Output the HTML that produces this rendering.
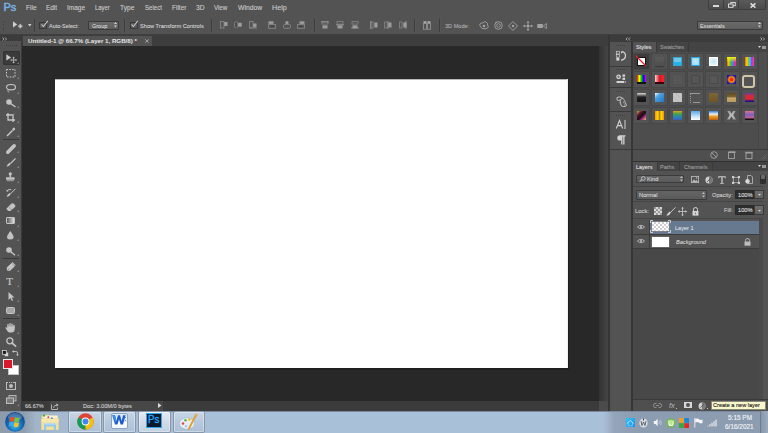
<!DOCTYPE html>
<html><head><meta charset="utf-8">
<style>
*{margin:0;padding:0;box-sizing:border-box}
html,body{width:768px;height:433px;overflow:hidden;background:#535353;font-family:"Liberation Sans",sans-serif;position:relative}
.a{position:absolute}
.t{position:absolute;white-space:pre;transform-origin:0 0;line-height:1;-webkit-text-stroke:0.1px currentColor}
svg{position:absolute;overflow:visible}
#wrap{position:absolute;left:0;top:0;width:768px;height:433px;overflow:hidden}
</style></head><body><div id="wrap">
<div class="a" style="left:0px;top:0px;width:768px;height:15px;background:#535353;"></div>
<div class="a" style="left:0px;top:15px;width:768px;height:1px;background:#484848;"></div>
<div class="a" style="left:0px;top:15px;width:768px;height:20px;background:#535353;"></div>
<div class="a" style="left:0px;top:34px;width:768px;height:1px;background:#3f3f3f;"></div>
<div class="a" style="left:0px;top:35px;width:22px;height:376px;background:#535353;"></div>
<div class="a" style="left:0px;top:35px;width:22px;height:6px;background:#3c3c3c;"></div>
<div class="a" style="left:21px;top:35px;width:1px;height:376px;background:#3a3a3a;"></div>
<div class="a" style="left:22px;top:35px;width:586px;height:11px;background:#3d3d3d;"></div>
<div class="a" style="left:23px;top:36px;width:129px;height:10px;background:#535353;"></div>
<div class="a" style="left:22px;top:46px;width:577px;height:355px;background:#282828;"></div>
<div class="a" style="left:56px;top:80px;width:513px;height:290px;background:#1f1f1f;"></div>
<div class="a" style="left:55px;top:79px;width:512px;height:289px;background:#ffffff;"></div>
<div class="a" style="left:55px;top:79px;width:512px;height:1px;background:#b8b8b8;"></div>
<div class="a" style="left:567px;top:79px;width:0.6px;height:289px;background:#f0f0f0;"></div>
<div class="a" style="left:599px;top:46px;width:9.5px;height:355px;background:linear-gradient(90deg,#333 0,#3a3a3a 40%,#454545 80%,#3a3a3a 100%);"></div>
<div class="a" style="left:599px;top:401px;width:9.5px;height:9.5px;background:#4b4b4b;"></div>
<div class="a" style="left:22px;top:401px;width:141px;height:9.5px;background:#474747;"></div>
<div class="a" style="left:22px;top:401px;width:28px;height:9.5px;background:#3b3b3b;"></div>
<div class="a" style="left:163px;top:401px;width:436px;height:9.5px;background:#3b3b3b;"></div>
<div class="a" style="left:608px;top:35px;width:160px;height:376px;background:#363636;"></div>
<div class="a" style="left:610px;top:35px;width:158px;height:7px;background:#3c3c3c;"></div>
<div class="a" style="left:610px;top:42px;width:21px;height:369px;background:#535353;"></div>
<div class="a" style="left:633px;top:42px;width:135px;height:369px;background:#535353;"></div>
<div class="a" style="left:0px;top:410.5px;width:768px;height:22.5px;background:linear-gradient(90deg,#8d9bab 0px,#8f9eae 24px,#a0b3c7 35px,#a5bad0 68px,#a9c0d9 210px,#a9c0d9 603px,#a2b5cb 608px,#93a5ba 614px,#8c9cb1 640px,#8c9cb1 768px);"></div>
<div class="t" style="left:3.4px;top:1.5px;font-size:11px;font-weight:400;color:#78afe2;-webkit-text-stroke:0.5px #78afe2">Ps</div>
<div class="a" style="left:708px;top:0px;width:16px;height:10px;background:linear-gradient(#5a5a5a,#4c4c4c);border:1px solid #3e3e3e;border-top:none;border-radius:0 0 0 2px"></div>
<div class="a" style="left:723px;top:0px;width:16px;height:10px;background:linear-gradient(#5a5a5a,#4c4c4c);border:1px solid #3e3e3e;border-top:none"></div>
<div class="a" style="left:738px;top:0px;width:28px;height:10px;background:linear-gradient(#5a5a5a,#4c4c4c);border:1px solid #3e3e3e;border-top:none;border-radius:0 0 2px 0"></div>
<div class="a" style="left:713px;top:5px;width:6px;height:2px;background:#d8d8d8;"></div>
<svg style="left:728px;top:2.2px" width="8" height="6"><rect x="2.8" y="0.5" width="4.5" height="3.2" fill="none" stroke="#d8d8d8" stroke-width="1"/><rect x="0.5" y="2" width="4.5" height="3.3" fill="#555" stroke="#d8d8d8" stroke-width="1"/></svg>
<svg style="left:749.5px;top:2.6px" width="6" height="5"><path d="M0.6 0.4L5.4 4.6M5.4 0.4L0.6 4.6" stroke="#e0e0e0" stroke-width="1.4"/></svg>
<div class="a" style="left:3.3px;top:20.5px;width:1px;height:1px;background:#3a3a3a;"></div>
<div class="a" style="left:3.3px;top:24px;width:1px;height:1px;background:#3a3a3a;"></div>
<div class="a" style="left:3.3px;top:27.5px;width:1px;height:1px;background:#3a3a3a;"></div>
<div class="a" style="left:3.3px;top:30px;width:1px;height:1px;background:#3a3a3a;"></div>
<svg style="left:12px;top:21px" width="12" height="9"><path d="M1 0.3L5.2 3.5L1 6.5Z" fill="#cfcfcf"/><path d="M8.3 2.6L10.9 5.2L8.3 7.8L5.7 5.2Z" fill="#9a9a9a"/><path d="M8.3 3.2V7.2M6.3 5.2H10.3" stroke="#cfcfcf" stroke-width="0.8"/></svg>
<svg style="left:27.5px;top:24px" width="4" height="3"><path d="M0 0H3.5L1.75 2.5Z" fill="#d0d0d0"/></svg>
<div class="a" style="left:34px;top:19px;width:1px;height:13px;background:#3d3d3d;"></div>
<div class="a" style="left:35px;top:19px;width:1px;height:13px;background:#565656;"></div>
<div class="a" style="left:124px;top:19px;width:1px;height:13px;background:#3d3d3d;"></div>
<div class="a" style="left:125px;top:19px;width:1px;height:13px;background:#565656;"></div>
<div class="a" style="left:210.5px;top:19px;width:1px;height:13px;background:#3d3d3d;"></div>
<div class="a" style="left:211.5px;top:19px;width:1px;height:13px;background:#565656;"></div>
<div class="a" style="left:313.5px;top:19px;width:1px;height:13px;background:#3d3d3d;"></div>
<div class="a" style="left:314.5px;top:19px;width:1px;height:13px;background:#565656;"></div>
<div class="a" style="left:414.2px;top:19px;width:1px;height:13px;background:#3d3d3d;"></div>
<div class="a" style="left:415.2px;top:19px;width:1px;height:13px;background:#565656;"></div>
<div class="a" style="left:439.2px;top:19px;width:1px;height:13px;background:#3d3d3d;"></div>
<div class="a" style="left:440.2px;top:19px;width:1px;height:13px;background:#565656;"></div>
<div class="a" style="left:39px;top:21.8px;width:8px;height:7px;background:#575757;border:1px solid #383838;"></div>
<svg style="left:39.5px;top:20px" width="9" height="8"><path d="M1.5 4.3L3.4 6.5L7.8 0.8" fill="none" stroke="#c8c8c8" stroke-width="1.1"/></svg>
<div class="a" style="left:129.8px;top:21.8px;width:8px;height:7px;background:#575757;border:1px solid #383838;"></div>
<svg style="left:130.3px;top:20px" width="9" height="8"><path d="M1.5 4.3L3.4 6.5L7.8 0.8" fill="none" stroke="#c8c8c8" stroke-width="1.1"/></svg>
<div class="a" style="left:87.5px;top:20.6px;width:31px;height:9px;background:linear-gradient(#6a6a6a,#5e5e5e);border:1px solid #3a3a3a;border-radius:1px"></div>
<svg style="left:113.5px;top:22.3px" width="3" height="6"><path d="M0 2H3L1.5 0Z M0 3.6H3L1.5 5.6Z" fill="#cfcfcf"/></svg>
<div class="a" style="left:696.5px;top:20.6px;width:66.5px;height:9px;background:linear-gradient(#6a6a6a,#5e5e5e);border:1px solid #3a3a3a;border-radius:1px"></div>
<svg style="left:758px;top:22.3px" width="3" height="6"><path d="M0 2H3L1.5 0Z M0 3.6H3L1.5 5.6Z" fill="#cfcfcf"/></svg>
<svg style="left:219.7px;top:21.3px" width="8" height="8"><rect x="0.5" y="0.5" width="3.5" height="6.5" fill="none" stroke="#808080" stroke-width="1"/><rect x="4.2" y="1" width="3.3" height="4" fill="#9c9c9c"/></svg>
<svg style="left:234.2px;top:21.3px" width="8" height="8"><rect x="0.5" y="0.8" width="3.3" height="6" rx="1.5" fill="none" stroke="#808080" stroke-width="1"/><path d="M2.2 1.5V6.5" stroke="#3a3a3a" stroke-width="0.8"/><rect x="4" y="1.8" width="3.8" height="4" rx="1" fill="#9c9c9c"/></svg>
<svg style="left:249px;top:21.3px" width="8" height="8"><rect x="0.5" y="0.5" width="3.5" height="6.2" fill="none" stroke="#808080" stroke-width="1"/><rect x="4.2" y="2.5" width="3.3" height="4" fill="#9c9c9c"/><path d="M0 7.3H8" stroke="#808080" stroke-width="0.8"/></svg>
<svg style="left:267.8px;top:21.3px" width="8" height="8"><rect x="0.5" y="0.3" width="5" height="2.6" fill="#9c9c9c"/><rect x="0.5" y="3.5" width="7" height="3.8" fill="none" stroke="#808080" stroke-width="1"/><rect x="3" y="4.8" width="3" height="1.2" fill="#3e3e3e"/></svg>
<svg style="left:282.5px;top:21.3px" width="8" height="8"><circle cx="4" cy="1.8" r="1.7" fill="#9c9c9c"/><rect x="0.5" y="3.5" width="7" height="3.8" rx="1.3" fill="none" stroke="#808080" stroke-width="1"/><path d="M4 7V8" stroke="#808080"/></svg>
<svg style="left:297px;top:21.3px" width="8" height="8"><rect x="2.5" y="0.3" width="5" height="2.6" fill="#9c9c9c"/><rect x="0.5" y="3.5" width="7" height="3.8" fill="none" stroke="#808080" stroke-width="1"/><rect x="2" y="4.8" width="3" height="1.2" fill="#3e3e3e"/></svg>
<svg style="left:321.3px;top:21.3px" width="8" height="8"><rect x="1" y="0.5" width="6" height="2.6" fill="none" stroke="#808080" stroke-width="0.9"/><rect x="1.5" y="4.3" width="5" height="3.2" fill="#9c9c9c"/><path d="M0 1H8" stroke="#9c9c9c" stroke-width="0.8"/></svg>
<svg style="left:335.7px;top:21.3px" width="8" height="8"><rect x="1" y="0.5" width="6" height="2.6" fill="none" stroke="#808080" stroke-width="0.9"/><rect x="1.5" y="4.3" width="5" height="3.2" fill="#9c9c9c"/><path d="M0 3.8H8" stroke="#9c9c9c" stroke-width="0.8"/></svg>
<svg style="left:350.5px;top:21.3px" width="8" height="8"><rect x="1" y="0.5" width="6" height="2.6" fill="none" stroke="#808080" stroke-width="0.9"/><rect x="1.5" y="4.3" width="5" height="3.2" fill="#9c9c9c"/><path d="M0 6.8H8" stroke="#9c9c9c" stroke-width="0.8"/></svg>
<svg style="left:370px;top:21.3px" width="8" height="8"><rect x="0.5" y="1" width="2.6" height="6" fill="none" stroke="#808080" stroke-width="0.9"/><rect x="4.3" y="1.5" width="3.2" height="5" fill="#9c9c9c"/><path d="M1 0V8" stroke="#9c9c9c" stroke-width="0.8"/></svg>
<svg style="left:384px;top:21.3px" width="8" height="8"><rect x="0.5" y="1" width="2.6" height="6" fill="none" stroke="#808080" stroke-width="0.9"/><rect x="4.3" y="1.5" width="3.2" height="5" fill="#9c9c9c"/><path d="M4 0V8" stroke="#9c9c9c" stroke-width="0.8"/></svg>
<svg style="left:399.4px;top:21.3px" width="8" height="8"><rect x="0.5" y="1" width="2.6" height="6" fill="none" stroke="#808080" stroke-width="0.9"/><rect x="4.3" y="1.5" width="3.2" height="5" fill="#9c9c9c"/><path d="M7 0V8" stroke="#9c9c9c" stroke-width="0.8"/></svg>
<svg style="left:422.8px;top:21px" width="8" height="9"><rect x="0.5" y="2.5" width="3" height="5.8" fill="none" stroke="#8e8e8e" stroke-width="0.9"/><rect x="4.5" y="2.5" width="3" height="5.8" fill="none" stroke="#8e8e8e" stroke-width="0.9"/><rect x="0.5" y="0.2" width="3" height="2" fill="#a9a9a9"/><rect x="4.5" y="0.2" width="3" height="2" fill="#a9a9a9"/></svg>
<svg style="left:478.5px;top:20.5px" width="10" height="9"><path d="M2 6Q0 5 1 3Q2 1.5 4 2Q5 0 7 1Q9 2 8.5 4Q10 5.5 8.5 7Q7 8.5 5 7.5Q3 8.5 2 6Z" fill="none" stroke="#a2a2a2" stroke-width="0.9"/><circle cx="5" cy="5" r="1.3" fill="#a2a2a2"/></svg>
<svg style="left:493.5px;top:20.5px" width="9" height="9"><circle cx="4.5" cy="4.5" r="3.8" fill="none" stroke="#a2a2a2" stroke-width="0.9"/><circle cx="4.5" cy="4.5" r="1.8" fill="none" stroke="#a2a2a2" stroke-width="0.9"/><path d="M1 1.5L2.5 0.5L2.8 2.3Z" fill="#a2a2a2"/></svg>
<svg style="left:508px;top:20.5px" width="10" height="10"><path d="M5 0.5L9.5 5L5 9.5L0.5 5Z" fill="none" stroke="#a2a2a2" stroke-width="0.9"/><circle cx="5" cy="5" r="1.2" fill="#a2a2a2"/></svg>
<svg style="left:522.5px;top:20.5px" width="10" height="10"><path d="M5 0.5V9.5M0.5 5H9.5" stroke="#a2a2a2" stroke-width="0.9"/><path d="M5 0L6.5 1.8H3.5Z M5 10L6.5 8.2H3.5Z M0 5L1.8 3.5V6.5Z M10 5L8.2 3.5V6.5Z" fill="#a2a2a2"/><circle cx="5" cy="5" r="1.3" fill="#a2a2a2"/></svg>
<svg style="left:537px;top:21.5px" width="10" height="8"><rect x="0.3" y="2" width="5.5" height="4" fill="#a2a2a2"/><path d="M6.3 4L9.5 1.5V6.5Z" fill="none" stroke="#a2a2a2" stroke-width="0.8"/></svg>
<svg style="left:2px;top:36.5px" width="6" height="4"><path d="M0.5 0.5L2 2L0.5 3.5M3 0.5L4.5 2L3 3.5" fill="none" stroke="#bdbdbd" stroke-width="0.8"/></svg>
<div class="a" style="left:6px;top:44.5px;width:1px;height:1px;background:#3e3e3e;"></div>
<div class="a" style="left:8px;top:44.5px;width:1px;height:1px;background:#3e3e3e;"></div>
<div class="a" style="left:10px;top:44.5px;width:1px;height:1px;background:#3e3e3e;"></div>
<div class="a" style="left:12px;top:44.5px;width:1px;height:1px;background:#3e3e3e;"></div>
<div class="a" style="left:14px;top:44.5px;width:1px;height:1px;background:#3e3e3e;"></div>
<div class="a" style="left:16px;top:44.5px;width:1px;height:1px;background:#3e3e3e;"></div>
<div class="a" style="left:3px;top:51.4px;width:16.5px;height:13.5px;background:#3b3b3b;border-radius:2px;box-shadow:inset 0 0 0 1px #333"></div>
<svg style="left:5.5px;top:54.3px" width="12" height="12"><path d="M0.3 0.3L5.2 3.6L0.3 6.5Z" fill="#c8c8c8"/><path d="M7.6 3.3V8.7M4.9 6H10.3" stroke="#b8b8b8" stroke-width="0.9"/><path d="M7.6 2.6L8.8 3.9H6.4Z M7.6 9.4L8.8 8.1H6.4Z M4.2 6L5.5 4.8V7.2Z M11 6L9.7 4.8V7.2Z" fill="#b8b8b8"/></svg>
<svg style="left:17px;top:62px" width="2" height="2"><path d="M1.8 0.2V1.8H0.2Z" fill="#a8a8a8"/></svg>
<svg style="left:6px;top:68.5px" width="12" height="12"><rect x="0.5" y="0.5" width="8.5" height="7.5" fill="none" stroke="#c8c8c8" stroke-width="1" stroke-dasharray="1.6 1.2"/></svg>
<svg style="left:17px;top:76.5px" width="2" height="2"><path d="M1.8 0.2V1.8H0.2Z" fill="#a8a8a8"/></svg>
<svg style="left:5.5px;top:83.5px" width="12" height="12"><ellipse cx="5" cy="3.2" rx="4.5" ry="2.7" fill="none" stroke="#c8c8c8" stroke-width="1.1"/><path d="M2 5.5Q1.5 7.5 3 8.5" fill="none" stroke="#c8c8c8" stroke-width="0.9"/></svg>
<svg style="left:17px;top:91.5px" width="2" height="2"><path d="M1.8 0.2V1.8H0.2Z" fill="#a8a8a8"/></svg>
<svg style="left:6px;top:98.5px" width="12" height="12"><circle cx="3" cy="3" r="2.8" fill="#c4c4c4"/><path d="M4.5 4.5L9.5 8" stroke="#c8c8c8" stroke-width="1.3"/></svg>
<svg style="left:17px;top:106px" width="2" height="2"><path d="M1.8 0.2V1.8H0.2Z" fill="#a8a8a8"/></svg>
<svg style="left:6px;top:112.5px" width="10" height="10"><path d="M2 0V7H9M0 2H7V9" fill="none" stroke="#c8c8c8" stroke-width="1.3"/><path d="M8.5 0.5L6 3" stroke="#999" stroke-width="0.7"/></svg>
<svg style="left:17px;top:120.5px" width="2" height="2"><path d="M1.8 0.2V1.8H0.2Z" fill="#a8a8a8"/></svg>
<svg style="left:6px;top:127px" width="12" height="12"><path d="M1 9L6.5 3.5" stroke="#c8c8c8" stroke-width="1.5"/><path d="M6 2.2L7.8 0.5Q9.3 0.8 9.2 2.2L7.5 4Z" fill="#c4c4c4"/></svg>
<svg style="left:17px;top:135px" width="2" height="2"><path d="M1.8 0.2V1.8H0.2Z" fill="#a8a8a8"/></svg>
<div class="a" style="left:3px;top:139.3px;width:15.5px;height:1px;background:#3a3a3a;"></div>
<svg style="left:6px;top:143.5px" width="12" height="12"><path d="M1.8 8.2L8.2 1.8" stroke="#c4c4c4" stroke-width="3.6" stroke-linecap="round"/></svg>
<svg style="left:17px;top:151px" width="2" height="2"><path d="M1.8 0.2V1.8H0.2Z" fill="#a8a8a8"/></svg>
<svg style="left:6px;top:157.5px" width="12" height="12"><path d="M9.5 0.5L4.5 5.5" stroke="#c8c8c8" stroke-width="1.1"/><path d="M4.8 5.2Q3.5 8.8 0.5 8.5Q1.5 6 3.8 4.8Z" fill="#c6c6c6"/></svg>
<svg style="left:17px;top:165.5px" width="2" height="2"><path d="M1.8 0.2V1.8H0.2Z" fill="#a8a8a8"/></svg>
<svg style="left:5.6px;top:172.2px" width="12" height="12"><circle cx="4.3" cy="1.8" r="1.6" fill="#c4c4c4"/><path d="M3.5 2.5H5.1V5.2H3.5Z" fill="#c4c4c4"/><rect x="0" y="5.2" width="8.6" height="2.6" rx="0.6" fill="#c4c4c4"/><rect x="0.8" y="8.2" width="7" height="1" fill="#a8a8a8"/></svg>
<svg style="left:17px;top:180.5px" width="2" height="2"><path d="M1.8 0.2V1.8H0.2Z" fill="#a8a8a8"/></svg>
<svg style="left:6px;top:187.5px" width="12" height="12"><path d="M9.5 0.8L4.5 5.8" stroke="#c8c8c8" stroke-width="1"/><path d="M4.8 5.5Q3.5 9 0.5 8.8Q1.5 6.3 3.8 5.1Z" fill="#c6c6c6"/><path d="M0.8 3.2Q2.5 0.5 5.3 1.7" fill="none" stroke="#c8c8c8" stroke-width="0.9"/><path d="M0.3 1.5L1 3.8L3 3Z" fill="#c8c8c8"/></svg>
<svg style="left:17px;top:195.5px" width="2" height="2"><path d="M1.8 0.2V1.8H0.2Z" fill="#a8a8a8"/></svg>
<svg style="left:5.5px;top:202px" width="12" height="12"><path d="M0.5 6.5L5.5 1.5Q6.5 0.8 7.5 1.5L9.2 3.2Q9.8 4 9 5L4.5 9H2.5L0.7 7.5Z" fill="#c2c2c2"/><path d="M2.5 4.5L6 8" stroke="#8a8a8a" stroke-width="0.6"/></svg>
<svg style="left:17px;top:210px" width="2" height="2"><path d="M1.8 0.2V1.8H0.2Z" fill="#a8a8a8"/></svg>
<div class="a" style="left:5.8px;top:217.3px;width:9.2px;height:7.2px;background:linear-gradient(90deg,#5a5a5a,#dcdcdc);border:1px solid #c4c4c4;border-radius:1px"></div>
<svg style="left:17px;top:224.5px" width="2" height="2"><path d="M1.8 0.2V1.8H0.2Z" fill="#a8a8a8"/></svg>
<svg style="left:7px;top:231.4px" width="12" height="12"><path d="M3.3 0Q0 4.5 0 6Q0 8.5 3.3 8.5Q6.6 8.5 6.6 6Q6.6 4.5 3.3 0Z" fill="#c2c2c2"/></svg>
<svg style="left:17px;top:239px" width="2" height="2"><path d="M1.8 0.2V1.8H0.2Z" fill="#a8a8a8"/></svg>
<svg style="left:6px;top:246.6px" width="12" height="12"><circle cx="3" cy="3" r="2.8" fill="#c4c4c4"/><path d="M4.8 4.8L9 8.3" stroke="#c8c8c8" stroke-width="1.3"/></svg>
<svg style="left:17px;top:254px" width="2" height="2"><path d="M1.8 0.2V1.8H0.2Z" fill="#a8a8a8"/></svg>
<div class="a" style="left:3px;top:257.8px;width:15.5px;height:1px;background:#3a3a3a;"></div>
<svg style="left:6px;top:261.5px" width="12" height="12"><path d="M1 9L0.8 5.5L5.5 1L8.7 4.2L4.2 8.8Z" fill="#c4c4c4"/><path d="M1 9L3.5 6.5" stroke="#666" stroke-width="0.6"/><path d="M6 0.5L9.2 3.7" stroke="#c4c4c4" stroke-width="1.1"/></svg>
<svg style="left:17px;top:269.5px" width="2" height="2"><path d="M1.8 0.2V1.8H0.2Z" fill="#a8a8a8"/></svg>
<div class="t" style="left:6.2px;top:276px;font-size:11px;font-family:'Liberation Serif',serif;color:#c4c4c4;-webkit-text-stroke:0.2px #c4c4c4">T</div>
<svg style="left:17px;top:285px" width="2" height="2"><path d="M1.8 0.2V1.8H0.2Z" fill="#a8a8a8"/></svg>
<svg style="left:8px;top:292.2px" width="12" height="12"><path d="M0.5 0L6.5 5.5H3.8L5 8.5L3.8 9L2.5 6L0.5 8Z" fill="#c4c4c4"/></svg>
<svg style="left:17px;top:300px" width="2" height="2"><path d="M1.8 0.2V1.8H0.2Z" fill="#a8a8a8"/></svg>
<div class="a" style="left:6px;top:306.8px;width:9px;height:7.6px;background:#a6a6a6;border:1px solid #c4c4c4;border-radius:1.5px"></div>
<svg style="left:17px;top:314px" width="2" height="2"><path d="M1.8 0.2V1.8H0.2Z" fill="#a8a8a8"/></svg>
<div class="a" style="left:3px;top:318.3px;width:15.5px;height:1px;background:#3a3a3a;"></div>
<svg style="left:5.2px;top:322.6px" width="12" height="12"><path d="M3 4V1.6M5 3.8V0.8M7 3.8V1.2M9 4.2V2.4" stroke="#c4c4c4" stroke-width="1.4" stroke-linecap="round"/><path d="M2.3 3.5H9.7V6.5Q9.5 9.5 6.5 9.5H4.5Q3 9.5 2 7.5L0.3 4.8Q0.5 4 1.3 4.3L2.3 5.2Z" fill="#c4c4c4"/></svg>
<svg style="left:17px;top:331.5px" width="2" height="2"><path d="M1.8 0.2V1.8H0.2Z" fill="#a8a8a8"/></svg>
<svg style="left:5.6px;top:336.6px" width="12" height="12"><circle cx="3.8" cy="3.8" r="3" fill="none" stroke="#c4c4c4" stroke-width="1.3"/><path d="M6 6L9.6 9.2" stroke="#c4c4c4" stroke-width="1.7" stroke-linecap="round"/></svg>
<svg style="left:2px;top:350.4px" width="8" height="8"><rect x="2.6" y="2.6" width="3.6" height="3.6" fill="#d8d8d8"/><rect x="0.5" y="0.5" width="3.8" height="3.8" fill="#1a1a1a" stroke="#d8d8d8" stroke-width="0.8"/></svg>
<svg style="left:12px;top:350.2px" width="8" height="8"><path d="M1 1.5H4Q5.5 1.5 5.5 3V5" fill="none" stroke="#c4c4c4" stroke-width="0.9"/><path d="M0 1.5L1.6 0V3Z M5.5 6L4 4.4H7Z" fill="#c4c4c4"/></svg>
<div class="a" style="left:3.2px;top:359.4px;width:9.5px;height:10.1px;background:#d7192f;border:1px solid #e8e8e8;z-index:2"></div>
<div class="a" style="left:8.1px;top:364.9px;width:10.8px;height:10.6px;background:#ffffff;border:1px solid #c4c4c4"></div>
<svg style="left:6px;top:381.5px" width="12" height="12"><rect x="0.5" y="0.5" width="9" height="7" fill="none" stroke="#bdbdbd" stroke-width="1"/><circle cx="5" cy="4" r="2" fill="#bdbdbd"/><path d="M2 0.5H8" stroke="#535353" stroke-width="1" stroke-dasharray="1 1"/></svg>
<svg style="left:5.5px;top:394.8px" width="12" height="12"><rect x="3" y="0.5" width="7" height="5.5" fill="#6a6a6a" stroke="#bdbdbd" stroke-width="0.9"/><rect x="0.5" y="3" width="7" height="5.5" fill="#7a7a7a" stroke="#c8c8c8" stroke-width="0.9"/></svg>
<svg style="left:17px;top:404px" width="2" height="2"><path d="M1.8 0.2V1.8H0.2Z" fill="#a8a8a8"/></svg>
<svg style="left:624.5px;top:36.8px" width="6" height="4"><path d="M2.5 0.5L1 2L2.5 3.5M5 0.5L3.5 2L5 3.5" fill="none" stroke="#bdbdbd" stroke-width="0.8"/></svg>
<svg style="left:760px;top:36.8px" width="6" height="4"><path d="M0.5 0.5L2 2L0.5 3.5M3 0.5L4.5 2L3 3.5" fill="none" stroke="#bdbdbd" stroke-width="0.8"/></svg>
<div class="a" style="left:610px;top:42px;width:21px;height:23.5px;background:#535353;"></div>
<div class="a" style="left:610px;top:66.5px;width:21px;height:20.0px;background:#535353;"></div>
<div class="a" style="left:610px;top:87.5px;width:21px;height:23.5px;background:#535353;"></div>
<div class="a" style="left:610px;top:112px;width:21px;height:36.5px;background:#535353;"></div>
<div class="a" style="left:610px;top:149.5px;width:21px;height:261.5px;background:#535353;"></div>
<div class="a" style="left:610px;top:65.5px;width:21px;height:1px;background:#3a3a3a;"></div>
<div class="a" style="left:610px;top:86.5px;width:21px;height:1px;background:#3a3a3a;"></div>
<div class="a" style="left:610px;top:111px;width:21px;height:1px;background:#3a3a3a;"></div>
<div class="a" style="left:610px;top:148.5px;width:21px;height:1px;background:#3a3a3a;"></div>
<div class="a" style="left:616px;top:45px;width:1px;height:0.8px;background:#404040;"></div>
<div class="a" style="left:618px;top:45px;width:1px;height:0.8px;background:#404040;"></div>
<div class="a" style="left:620px;top:45px;width:1px;height:0.8px;background:#404040;"></div>
<div class="a" style="left:622px;top:45px;width:1px;height:0.8px;background:#404040;"></div>
<div class="a" style="left:624px;top:45px;width:1px;height:0.8px;background:#404040;"></div>
<div class="a" style="left:616px;top:68.8px;width:1px;height:0.8px;background:#404040;"></div>
<div class="a" style="left:618px;top:68.8px;width:1px;height:0.8px;background:#404040;"></div>
<div class="a" style="left:620px;top:68.8px;width:1px;height:0.8px;background:#404040;"></div>
<div class="a" style="left:622px;top:68.8px;width:1px;height:0.8px;background:#404040;"></div>
<div class="a" style="left:624px;top:68.8px;width:1px;height:0.8px;background:#404040;"></div>
<div class="a" style="left:616px;top:91px;width:1px;height:0.8px;background:#404040;"></div>
<div class="a" style="left:618px;top:91px;width:1px;height:0.8px;background:#404040;"></div>
<div class="a" style="left:620px;top:91px;width:1px;height:0.8px;background:#404040;"></div>
<div class="a" style="left:622px;top:91px;width:1px;height:0.8px;background:#404040;"></div>
<div class="a" style="left:624px;top:91px;width:1px;height:0.8px;background:#404040;"></div>
<div class="a" style="left:616px;top:114.8px;width:1px;height:0.8px;background:#404040;"></div>
<div class="a" style="left:618px;top:114.8px;width:1px;height:0.8px;background:#404040;"></div>
<div class="a" style="left:620px;top:114.8px;width:1px;height:0.8px;background:#404040;"></div>
<div class="a" style="left:622px;top:114.8px;width:1px;height:0.8px;background:#404040;"></div>
<div class="a" style="left:624px;top:114.8px;width:1px;height:0.8px;background:#404040;"></div>
<svg style="left:616px;top:51px" width="11" height="10"><rect x="0.3" y="0.3" width="3" height="2.6" fill="none" stroke="#cfcfcf" stroke-width="0.7"/><rect x="0.3" y="3.6" width="3" height="2.6" fill="none" stroke="#cfcfcf" stroke-width="0.7"/><rect x="0.3" y="6.8" width="3" height="2.8" fill="#d6d6d6"/><path d="M5 9.2Q9.6 8.5 9.5 4.5Q9.3 1.2 6 0.5" fill="none" stroke="#d6d6d6" stroke-width="1.2"/><path d="M5 0L7 1.7L5 2.4Z" fill="#d6d6d6"/></svg>
<svg style="left:615.8px;top:73.5px" width="11" height="10"><circle cx="2.6" cy="2.8" r="2.4" fill="#d4d4d4"/><path d="M1.2 2.8H4M2.6 1.4V4.2" stroke="#535353" stroke-width="0.6"/><rect x="6.5" y="0.5" width="2.6" height="2.2" fill="#d4d4d4"/><rect x="6.5" y="3.7" width="2.6" height="2.2" fill="#d4d4d4"/><rect x="0.5" y="7" width="7.5" height="2" fill="#d4d4d4"/><rect x="8.5" y="7" width="1.5" height="2" fill="#999"/></svg>
<svg style="left:615.5px;top:96.3px" width="12" height="12"><path d="M1 1.5Q4 0 6.5 2L4 4Q2.5 5 1 4Z" fill="none" stroke="#c8c8c8" stroke-width="0.9"/><path d="M4 4L5 9Q6 11 9 10.5L10.5 9.5L8.5 4.5Q7.5 3 6.5 2" fill="none" stroke="#c8c8c8" stroke-width="0.9"/><path d="M3.5 6L6 11M7 5L9 10" stroke="#a8a8a8" stroke-width="0.6"/></svg>
<svg style="left:615.5px;top:120.3px" width="11" height="9"><path d="M0.3 8.5L3.5 0.5L6.7 8.5M1.6 5.6H5.4" fill="none" stroke="#d2d2d2" stroke-width="1.1"/><path d="M9 0V9" stroke="#d2d2d2" stroke-width="1"/></svg>
<svg style="left:616.5px;top:135.3px" width="9" height="10"><path d="M3 0.3H8.5V1.6H7.5V9.5H6.2V1.6H5.5V9.5H4.2V5.6H3Q0.3 5.6 0.3 3Q0.3 0.3 3 0.3Z" fill="#d2d2d2"/></svg>
<div class="a" style="left:633px;top:42px;width:135px;height:10px;background:#444444;"></div>
<div class="a" style="left:633px;top:42px;width:23px;height:10px;background:#535353;"></div>
<div class="a" style="left:656px;top:42px;width:1px;height:10px;background:#3a3a3a;"></div>
<div class="a" style="left:688px;top:42px;width:1px;height:10px;background:#3a3a3a;"></div>
<svg style="left:758px;top:45.5px" width="8" height="3"><path d="M0 0H3L1.5 2Z" fill="#d0d0d0"/><rect x="4" y="0" width="4" height="0.7" fill="#bdbdbd"/><rect x="4" y="1.2" width="4" height="0.7" fill="#bdbdbd"/><rect x="4" y="2.3" width="4" height="0.7" fill="#bdbdbd"/></svg>
<div class="a" style="left:633px;top:52px;width:125px;height:97px;background:#4d4d4d;"></div>
<div class="a" style="left:758px;top:52px;width:10px;height:97px;background:#474747;"></div>
<div class="a" style="left:759px;top:52px;width:8px;height:97px;background:#4f4f4f;"></div>
<div class="a" style="left:633.0px;top:52.5px;width:17px;height:17px;background:#3c3c3c;border:1px solid #474747"></div>
<div class="a" style="left:651.0px;top:52.5px;width:17px;height:17px;background:#535353;border:1px solid #474747"></div>
<div class="a" style="left:669.0px;top:52.5px;width:17px;height:17px;background:#535353;border:1px solid #474747"></div>
<div class="a" style="left:687.0px;top:52.5px;width:17px;height:17px;background:#535353;border:1px solid #474747"></div>
<div class="a" style="left:705.0px;top:52.5px;width:17px;height:17px;background:#535353;border:1px solid #474747"></div>
<div class="a" style="left:723.0px;top:52.5px;width:17px;height:17px;background:#535353;border:1px solid #474747"></div>
<div class="a" style="left:741.0px;top:52.5px;width:17px;height:17px;background:#535353;border:1px solid #474747"></div>
<div class="a" style="left:633.0px;top:70.5px;width:17px;height:17px;background:#535353;border:1px solid #474747"></div>
<div class="a" style="left:651.0px;top:70.5px;width:17px;height:17px;background:#535353;border:1px solid #474747"></div>
<div class="a" style="left:669.0px;top:70.5px;width:17px;height:17px;background:#535353;border:1px solid #474747"></div>
<div class="a" style="left:687.0px;top:70.5px;width:17px;height:17px;background:#535353;border:1px solid #474747"></div>
<div class="a" style="left:705.0px;top:70.5px;width:17px;height:17px;background:#535353;border:1px solid #474747"></div>
<div class="a" style="left:723.0px;top:70.5px;width:17px;height:17px;background:#535353;border:1px solid #474747"></div>
<div class="a" style="left:741.0px;top:70.5px;width:17px;height:17px;background:#535353;border:1px solid #474747"></div>
<div class="a" style="left:633.0px;top:88.5px;width:17px;height:17px;background:#535353;border:1px solid #474747"></div>
<div class="a" style="left:651.0px;top:88.5px;width:17px;height:17px;background:#535353;border:1px solid #474747"></div>
<div class="a" style="left:669.0px;top:88.5px;width:17px;height:17px;background:#535353;border:1px solid #474747"></div>
<div class="a" style="left:687.0px;top:88.5px;width:17px;height:17px;background:#535353;border:1px solid #474747"></div>
<div class="a" style="left:705.0px;top:88.5px;width:17px;height:17px;background:#535353;border:1px solid #474747"></div>
<div class="a" style="left:723.0px;top:88.5px;width:17px;height:17px;background:#535353;border:1px solid #474747"></div>
<div class="a" style="left:741.0px;top:88.5px;width:17px;height:17px;background:#535353;border:1px solid #474747"></div>
<div class="a" style="left:633.0px;top:106.5px;width:17px;height:17px;background:#535353;border:1px solid #474747"></div>
<div class="a" style="left:651.0px;top:106.5px;width:17px;height:17px;background:#535353;border:1px solid #474747"></div>
<div class="a" style="left:669.0px;top:106.5px;width:17px;height:17px;background:#535353;border:1px solid #474747"></div>
<div class="a" style="left:687.0px;top:106.5px;width:17px;height:17px;background:#535353;border:1px solid #474747"></div>
<div class="a" style="left:705.0px;top:106.5px;width:17px;height:17px;background:#535353;border:1px solid #474747"></div>
<div class="a" style="left:723.0px;top:106.5px;width:17px;height:17px;background:#535353;border:1px solid #474747"></div>
<div class="a" style="left:741.0px;top:106.5px;width:17px;height:17px;background:#535353;border:1px solid #474747"></div>
<div class="a" style="left:637.0px;top:56.5px;width:9px;height:9px;background:#fff;border:1px solid #111"></div>
<svg style="left:635px;top:55px" width="12" height="12"><path d="M0.5 0.5L11 11" stroke="#d9262c" stroke-width="1.3"/></svg>
<div class="a" style="left:655.0px;top:56.5px;width:9px;height:9px;background:linear-gradient(#5a5a5a,#4e4e4e);box-shadow:0 1.5px 1.5px #3a3a3a"></div>
<div class="a" style="left:673.0px;top:56.5px;width:9px;height:9px;background:linear-gradient(#6fc7ea 0,#6fc7ea 55%,#1eb4ec 55%,#1eb4ec 100%);border:1px solid #3aa4d0"></div>
<div class="a" style="left:691.0px;top:56.5px;width:9px;height:9px;background:radial-gradient(#c6ecfb,#8fd8f5);border:1px solid #2fa7d8"></div>
<div class="a" style="left:709.0px;top:56.5px;width:9px;height:9px;background:radial-gradient(#bfe6f7,#f4fbff);border:1px solid #fff"></div>
<div class="a" style="left:727.0px;top:56.5px;width:9px;height:9px;background:linear-gradient(#ff0 0,transparent 60%),linear-gradient(90deg,#ff5a00,#ffd400,#3c3,#39f,#c3c,#f36);opacity:0.95"></div>
<div class="a" style="left:745.0px;top:56.5px;width:9px;height:9px;background:linear-gradient(90deg,#ff6a00 0,#ffd400 25%,#6c3 40%,#3cf 55%,#93f 75%,#f39 90%)"></div>
<div class="a" style="left:637.0px;top:74.5px;width:9px;height:9px;background:linear-gradient(90deg,#f00,#ff0,#0c0,#00f,#f0f);border-bottom:2px solid #111"></div>
<div class="a" style="left:655.0px;top:74.5px;width:9px;height:9px;background:linear-gradient(90deg,#f4d3d3,#d61a2a,#ff2020);border-bottom:2px solid #3a0010"></div>
<div class="a" style="left:673.0px;top:74.5px;width:9px;height:9px;background:#575757;box-shadow:0 0 1px #444"></div>
<div class="a" style="left:691.0px;top:74.5px;width:9px;height:9px;background:#555;border:1px solid #474747;border-radius:2px"></div>
<div class="a" style="left:709.0px;top:74.5px;width:9px;height:9px;background:#575757;border:1px solid #4a4a4a"></div>
<div class="a" style="left:727.0px;top:74.5px;width:9px;height:9px;background:radial-gradient(#ff2a00 25%,#ffa000 40%,#2a1aa8 70%,#1c0d7a)"></div>
<div class="a" style="left:741.5px;top:74.5px;width:13px;height:13px;border:2px solid #cfc6a8;border-radius:3px"></div>
<div class="a" style="left:637.0px;top:92.5px;width:9px;height:9px;background:linear-gradient(#ddd 0,#222 45%,#111);border-radius:1px"></div>
<div class="a" style="left:655.0px;top:92.5px;width:9px;height:9px;background:linear-gradient(135deg,#fff 0,#4aa0e0 35%,#1a78c8 100%)"></div>
<div class="a" style="left:673.0px;top:92.5px;width:9px;height:9px;background:repeating-linear-gradient(45deg,#bdbdbd 0,#c9c9c9 2px,#bdbdbd 4px)"></div>
<div class="a" style="left:690px;top:92.5px;width:10px;height:10px;border-top:1px solid #9a9a9a;border-left:1px dotted #9a9a9a"></div>
<div class="a" style="left:693px;top:99px;width:7px;height:4px;border-bottom:1px solid #9a9a9a"></div>
<div class="a" style="left:709.0px;top:92.5px;width:9px;height:9px;background:linear-gradient(#7e6534,#6e5628)"></div>
<div class="a" style="left:727.0px;top:92.5px;width:9px;height:9px;background:linear-gradient(#5e4b22 0,#7a6030 40%,#c9a96b 55%,#b89860)"></div>
<div class="a" style="left:745.0px;top:92.5px;width:9px;height:9px;background:linear-gradient(#5a3fa8 0,#d22a3a 30%,#d22a3a 70%,#1a1480 90%)"></div>
<div class="a" style="left:637.0px;top:110.5px;width:9px;height:9px;background:linear-gradient(135deg,#d8b040 0,#5a1230 30%,#111 55%,#9a2080 70%,#e0c060 100%)"></div>
<div class="a" style="left:655.0px;top:110.5px;width:9px;height:9px;background:linear-gradient(90deg,#ff8a00,#ffe000 30%,#c08000 50%,#ffe000 70%,#ff8a00)"></div>
<div class="a" style="left:673.0px;top:110.5px;width:9px;height:9px;background:linear-gradient(#e0a020 0,#3aa050 35%,#2a80c0 70%,#3a60b0)"></div>
<div class="a" style="left:691.0px;top:110.5px;width:9px;height:9px;background:linear-gradient(#5aa8e8,#c8e4f8 60%,#fff)"></div>
<div class="a" style="left:709.0px;top:110.5px;width:9px;height:9px;background:linear-gradient(#3080d0 0,#e8f0f8 35%,#f0a020 60%,#c06010 100%)"></div>
<div class="a" style="left:727.0px;top:110.5px;width:9px;height:9px;background:radial-gradient(#c0c0c0,#9a9a9a);clip-path:polygon(0 0,30% 0,50% 35%,70% 0,100% 0,70% 50%,100% 100%,70% 100%,50% 65%,30% 100%,0 100%,30% 50%)"></div>
<div class="a" style="left:745.0px;top:110.5px;width:9px;height:9px;background:linear-gradient(#e07090 0,#8060c0 40%,#c06090 75%,#111 90%)"></div>
<div class="a" style="left:633px;top:148.5px;width:135px;height:1px;background:#3a3a3a;"></div>
<div class="a" style="left:633px;top:149.5px;width:135px;height:11px;background:#4f4f4f;"></div>
<svg style="left:710.2px;top:151.3px" width="8" height="8"><circle cx="4" cy="4" r="3.3" fill="none" stroke="#a0a0a0" stroke-width="0.9"/><path d="M1.8 1.8L6.2 6.2" stroke="#a0a0a0" stroke-width="0.9"/></svg>
<svg style="left:728px;top:151.3px" width="8" height="8"><rect x="0.5" y="1.5" width="6" height="6" fill="none" stroke="#a0a0a0" stroke-width="0.9"/><rect x="0.5" y="0.3" width="7" height="1.6" fill="#a0a0a0"/></svg>
<svg style="left:744.5px;top:151.3px" width="8" height="8"><rect x="1" y="2" width="6" height="5.7" fill="none" stroke="#a8a8a8" stroke-width="0.9"/><rect x="0.2" y="0.8" width="7.6" height="1" fill="#a8a8a8"/></svg>
<svg style="left:761px;top:154px" width="6" height="6"><path d="M5.5 0.5L0.5 5.5M5.5 3L3 5.5" stroke="#6e6e6e" stroke-width="0.7"/></svg>
<div class="a" style="left:633px;top:160.5px;width:135px;height:1.2px;background:#303030;"></div>
<div class="a" style="left:633px;top:161.7px;width:135px;height:9px;background:#444444;"></div>
<div class="a" style="left:633px;top:161.7px;width:23.5px;height:9px;background:#535353;"></div>
<div class="a" style="left:656.5px;top:161.7px;width:1px;height:9px;background:#3a3a3a;"></div>
<div class="a" style="left:679px;top:161.7px;width:1px;height:9px;background:#3a3a3a;"></div>
<div class="a" style="left:712px;top:161.7px;width:1px;height:9px;background:#3a3a3a;"></div>
<svg style="left:758px;top:165.3px" width="8" height="3"><path d="M0 0H3L1.5 2Z" fill="#d0d0d0"/><rect x="4" y="0" width="4" height="0.7" fill="#bdbdbd"/><rect x="4" y="1.2" width="4" height="0.7" fill="#bdbdbd"/><rect x="4" y="2.3" width="4" height="0.7" fill="#bdbdbd"/></svg>
<div class="a" style="left:633px;top:170.7px;width:135px;height:240px;background:#535353;"></div>
<div class="a" style="left:633px;top:249.3px;width:126px;height:149.5px;background:#484848;"></div>
<div class="a" style="left:633px;top:186.3px;width:130px;height:1px;background:#454545;"></div>
<div class="a" style="left:633px;top:201.3px;width:130px;height:1px;background:#454545;"></div>
<div class="a" style="left:633px;top:218.3px;width:130px;height:1px;background:#454545;"></div>
<div class="a" style="left:635.6px;top:175px;width:48.5px;height:8px;background:linear-gradient(#636363,#5a5a5a);border:1px solid #3c3c3c;border-radius:1px"></div>
<svg style="left:638.5px;top:176.2px" width="7" height="6"><circle cx="4.3" cy="2.4" r="1.9" fill="none" stroke="#d0d0d0" stroke-width="0.8"/><path d="M3 3.7L0.6 5.6" stroke="#d0d0d0" stroke-width="1"/></svg>
<svg style="left:680px;top:176.4px" width="3" height="6"><path d="M0 2H3L1.5 0Z M0 3.6H3L1.5 5.6Z" fill="#bdbdbd"/></svg>
<svg style="left:690.8px;top:175.5px" width="8" height="7"><rect x="0.4" y="0.4" width="7.2" height="6.2" fill="none" stroke="#bdbdbd" stroke-width="0.8"/><path d="M1 6L3 3.5L4.5 5L5.5 4L7 6Z" fill="#bdbdbd"/><circle cx="5.6" cy="2" r="0.8" fill="#bdbdbd"/></svg>
<svg style="left:704.8px;top:175.5px" width="8" height="8"><circle cx="4" cy="4" r="3.6" fill="#cfcfcf"/><path d="M4 0.4A3.6 3.6 0 0 1 4 7.6Z" fill="#777"/><path d="M2.2 5.8L5.8 2.2" stroke="#535353" stroke-width="0.9"/></svg>
<svg style="left:718px;top:175.5px" width="8" height="8"><path d="M0.3 0.3H7.7V2.2H7L6.6 1.3H4.6V7H5.8V7.7H2.2V7H3.4V1.3H1.4L1 2.2H0.3Z" fill="#d0d0d0"/></svg>
<svg style="left:731.5px;top:175.5px" width="8" height="8"><rect x="1.3" y="1.3" width="5.4" height="5.4" fill="none" stroke="#bdbdbd" stroke-width="0.7"/><rect x="0" y="0" width="2.2" height="2.2" fill="#d0d0d0"/><rect x="5.8" y="0" width="2.2" height="2.2" fill="#d0d0d0"/><rect x="0" y="5.8" width="2.2" height="2.2" fill="#d0d0d0"/><rect x="5.8" y="5.8" width="2.2" height="2.2" fill="#d0d0d0"/></svg>
<svg style="left:745px;top:175px" width="8" height="9"><path d="M2.5 0.5H6L7.5 2V8.5H2.5Z" fill="none" stroke="#bdbdbd" stroke-width="0.8"/><circle cx="2.5" cy="6.3" r="2.2" fill="#d8d8d8"/></svg>
<div class="a" style="left:760px;top:174.5px;width:5.5px;height:9px;background:#2f2f2f;border-radius:1px"></div>
<div class="a" style="left:760.5px;top:175px;width:4.5px;height:4px;background:#6a6a6a;border-radius:1px"></div>
<div class="a" style="left:635.6px;top:190.2px;width:71px;height:10px;background:linear-gradient(#656565,#5a5a5a);border:1px solid #3c3c3c;border-radius:1px"></div>
<svg style="left:702.3px;top:192.2px" width="3" height="6"><path d="M0 2H3L1.5 0Z M0 3.6H3L1.5 5.6Z" fill="#bdbdbd"/></svg>
<div class="a" style="left:735px;top:189.7px;width:19.3px;height:9.8px;background:#2e2e2e;border:1px solid #2a2a2a"></div>
<div class="a" style="left:754.3px;top:189.7px;width:9.7px;height:9.8px;background:linear-gradient(#6e6e6e,#626262);border:1px solid #3a3a3a"></div>
<svg style="left:757.8px;top:194.0px" width="3" height="2"><path d="M0 0H3L1.5 1.8Z" fill="#d8d8d8"/></svg>
<div class="a" style="left:735px;top:205.3px;width:19.3px;height:9.8px;background:#2e2e2e;border:1px solid #2a2a2a"></div>
<div class="a" style="left:754.3px;top:205.3px;width:9.7px;height:9.8px;background:linear-gradient(#6e6e6e,#626262);border:1px solid #3a3a3a"></div>
<svg style="left:757.8px;top:209.60000000000002px" width="3" height="2"><path d="M0 0H3L1.5 1.8Z" fill="#d8d8d8"/></svg>
<svg style="left:653.8px;top:207.3px" width="8" height="8"><rect x="0" y="0" width="8" height="8" fill="#d8d8d8"/><rect x="0" y="0" width="2" height="2" fill="#999"/><rect x="4" y="0" width="2" height="2" fill="#999"/><rect x="2" y="2" width="2" height="2" fill="#999"/><rect x="6" y="2" width="2" height="2" fill="#999"/><rect x="0" y="4" width="2" height="2" fill="#999"/><rect x="4" y="4" width="2" height="2" fill="#999"/><rect x="2" y="6" width="2" height="2" fill="#999"/><rect x="6" y="6" width="2" height="2" fill="#999"/></svg>
<svg style="left:665.5px;top:206.5px" width="10" height="9"><path d="M9.5 0.3L4.5 5.5" stroke="#d0d0d0" stroke-width="0.9"/><path d="M4.8 5.2Q3.8 8.8 0.3 8.6Q1.8 6.2 3.8 4.6Z" fill="#d8d8d8"/></svg>
<svg style="left:678px;top:207px" width="9" height="9"><path d="M4.5 0.5V8.5M0.5 4.5H8.5" stroke="#c8c8c8" stroke-width="0.8"/><path d="M4.5 0L6 1.6H3Z M4.5 9L6 7.4H3Z M0 4.5L1.6 3V6Z M9 4.5L7.4 3V6Z" fill="#c8c8c8"/></svg>
<svg style="left:691.6px;top:206.6px" width="7" height="9"><path d="M1.5 4V2.5Q1.5 0.5 3.5 0.5Q5.5 0.5 5.5 2.5V4" fill="none" stroke="#d4d4d4" stroke-width="1"/><rect x="0.5" y="4" width="6" height="4.6" fill="#d4d4d4"/><rect x="3" y="5.5" width="1" height="1.8" fill="#777"/></svg>
<div class="a" style="left:633px;top:219.5px;width:130px;height:14.3px;background:#535353;"></div>
<div class="a" style="left:649.3px;top:220.5px;width:110px;height:13.3px;background:#67798f;"></div>
<div class="a" style="left:633px;top:233.8px;width:130px;height:1px;background:#3c3c3c;"></div>
<div class="a" style="left:633px;top:234.8px;width:126px;height:13.5px;background:#535353;"></div>
<div class="a" style="left:633px;top:248.3px;width:126px;height:1px;background:#3c3c3c;"></div>
<div class="a" style="left:649px;top:219.5px;width:1px;height:29px;background:#3c3c3c;"></div>
<div class="a" style="left:759px;top:219px;width:4px;height:192px;background:#4a4a4a;"></div>
<svg style="left:637.3px;top:224px" width="8" height="6"><path d="M0.4 3Q4 -0.4 7.6 3Q4 6.4 0.4 3Z" fill="none" stroke="#c8c8c8" stroke-width="0.8"/><circle cx="4" cy="3" r="1" fill="#c8c8c8"/></svg>
<svg style="left:637.3px;top:238.3px" width="8" height="6"><path d="M0.4 3Q4 -0.4 7.6 3Q4 6.4 0.4 3Z" fill="none" stroke="#c8c8c8" stroke-width="0.8"/><circle cx="4" cy="3" r="1" fill="#c8c8c8"/></svg>
<div class="a" style="left:652.3px;top:222.2px;width:16.7px;height:9.3px;background-color:#fff;background-image:linear-gradient(45deg,#cfcfcf 25%,transparent 25%,transparent 75%,#cfcfcf 75%),linear-gradient(45deg,#cfcfcf 25%,transparent 25%,transparent 75%,#cfcfcf 75%);background-size:4px 4px;background-position:0 0,2px 2px;box-shadow:0 0 0 0.5px #888"></div>
<svg style="left:650.3px;top:220.3px" width="21" height="13"><path d="M0.5 3V0.5H3M18 0.5H20.5V3M20.5 10V12.5H18M3 12.5H0.5V10" fill="none" stroke="#e6e6e6" stroke-width="0.8"/></svg>
<div class="a" style="left:652.3px;top:236.8px;width:16.7px;height:9.8px;background:#ffffff;box-shadow:0 0 0 0.5px #777"></div>
<svg style="left:744px;top:237.5px" width="7" height="8"><path d="M1.5 3.5V2.3Q1.5 0.5 3.5 0.5Q5.5 0.5 5.5 2.3V3.5" fill="none" stroke="#bdbdbd" stroke-width="0.9"/><rect x="0.5" y="3.5" width="6" height="4.2" fill="#bdbdbd"/></svg>
<div class="a" style="left:633px;top:398.8px;width:135px;height:1px;background:#3a3a3a;"></div>
<div class="a" style="left:633px;top:399.8px;width:135px;height:11.2px;background:#4f4f4f;"></div>
<svg style="left:652.5px;top:402.5px" width="9" height="5"><path d="M3.5 0.5H2Q0.5 0.5 0.5 2.5Q0.5 4.5 2 4.5H3.5M5.5 0.5H7Q8.5 0.5 8.5 2.5Q8.5 4.5 7 4.5H5.5M2.8 2.5H6.2" fill="none" stroke="#9a9a9a" stroke-width="0.8"/></svg>
<div class="t" style="left:669px;top:401.6px;font-size:7.5px;font-style:italic;color:#b8b8b8;-webkit-text-stroke:0">fx</div>
<div class="a" style="left:676.3px;top:407.8px;width:1px;height:1px;background:#bdbdbd;"></div>
<div class="a" style="left:683.5px;top:402.2px;width:8px;height:6px;background:#d8d8d8;"></div>
<div class="a" style="left:685.5px;top:403.3px;width:4px;height:3.8px;border-radius:50%;background:#535353"></div>
<svg style="left:698.3px;top:401.5px" width="8" height="8"><circle cx="4" cy="4" r="3.5" fill="#d0d0d0"/><path d="M4 0.5A3.5 3.5 0 0 1 4 7.5Z" fill="#7a7a7a"/><path d="M2.3 5.7L5.7 2.3" stroke="#4f4f4f" stroke-width="0.8"/></svg>
<div class="a" style="left:706.5px;top:407.8px;width:1px;height:1px;background:#bdbdbd;"></div>
<div class="a" style="left:711px;top:401.3px;width:55px;height:8.9px;background:#f8f6cc;border:1px solid #8a8a78"></div>
<div class="a" style="left:0;top:410.5px;width:768px;height:0.8px;background:#7a8a9c"></div>
<svg style="left:4px;top:411px" width="22" height="22"><defs><radialGradient id="orb" cx="50%" cy="65%" r="60%"><stop offset="0" stop-color="#3fd0f6"/><stop offset="0.55" stop-color="#1a6db8"/><stop offset="1" stop-color="#0d3f80"/></radialGradient></defs><circle cx="11" cy="11" r="10.2" fill="url(#orb)" stroke="#8aa8c8" stroke-width="0.6"/><ellipse cx="11" cy="6" rx="7" ry="4" fill="#ffffff" opacity="0.22"/><path d="M6 6.5Q8 5.5 10.3 6.3L9.7 10.6Q7.5 9.8 5.4 10.8Z" fill="#e8502a"/><path d="M11 6.4Q13.3 7.3 15.6 6.3L15 10.6Q12.8 11.6 10.4 10.7Z" fill="#7cc23a"/><path d="M5.3 11.3Q7.5 10.3 9.6 11.2L9 15.5Q6.9 14.6 4.7 15.6Z" fill="#3aa8e8"/><path d="M10.3 11.3Q12.6 12.2 14.9 11.2L14.3 15.5Q12 16.5 9.7 15.6Z" fill="#f6c02a"/></svg>
<svg style="left:41px;top:414px" width="18" height="17"><path d="M0.5 2.5Q0.5 0.8 2 0.8H7L8.5 2.3H16Q17.5 2.3 17.5 3.8V15.8H0.5Z" fill="#e9cf78"/><rect x="1.5" y="1.5" width="15" height="3" fill="#fbf3d6"/><circle cx="3" cy="1.6" r="1.2" fill="#34b040"/><circle cx="7.3" cy="3.2" r="1" fill="#e04848"/><circle cx="10.8" cy="4.2" r="1" fill="#5090e0"/><path d="M0.5 5H17.5V15.8H0.5Z" fill="#f4e09a"/><path d="M0.5 5H17.5V8H0.5Z" fill="#f8eab8" opacity="0.7"/><path d="M3 9.6H15V16H12.8V12.5H5.2V16H3Z" fill="#8fcaf2"/><rect x="3" y="9.3" width="12" height="1.3" fill="#b8e0fa"/></svg>
<div class="a" style="left:68.3px;top:411.2px;width:33.5px;height:21.8px;background:linear-gradient(#c8d6e5,#b7c9dc 50%,#adc1d7);border:1px solid #8798ad;border-radius:2px;box-shadow:inset 0 0 0 1px rgba(255,255,255,0.35)"></div>
<div class="a" style="left:102.8px;top:411.2px;width:33.7px;height:21.8px;background:linear-gradient(#c8d6e5,#b7c9dc 50%,#adc1d7);border:1px solid #8798ad;border-radius:2px;box-shadow:inset 0 0 0 1px rgba(255,255,255,0.35)"></div>
<div class="a" style="left:138.4px;top:411.2px;width:32.599999999999994px;height:21.8px;background:linear-gradient(#e4ecf4,#cfdbe8 50%,#c2d1e2);border:1px solid #8798ad;border-radius:2px;box-shadow:inset 0 0 0 1px rgba(255,255,255,0.35)"></div>
<div class="a" style="left:173.3px;top:411.2px;width:32.099999999999994px;height:21.8px;background:linear-gradient(#c8d6e5,#b7c9dc 50%,#adc1d7);border:1px solid #8798ad;border-radius:2px;box-shadow:inset 0 0 0 1px rgba(255,255,255,0.35)"></div>
<svg style="left:76.7px;top:413.2px" width="17" height="17"><circle cx="8.5" cy="8.5" r="8.2" fill="#db4437"/><path d="M8.5 8.5L1.4 4.4A8.2 8.2 0 0 0 8.5 16.7Z" fill="#0f9d58"/><path d="M8.5 8.5L8.5 16.7A8.2 8.2 0 0 0 15.6 4.4Z" fill="#f4c20d"/><path d="M8.5 8.5L1.4 4.4L4.6 8.5Z" fill="#0f9d58"/><circle cx="8.5" cy="8.5" r="3.9" fill="#fff"/><circle cx="8.5" cy="8.5" r="3" fill="#4285f4"/></svg>
<div class="a" style="left:111px;top:412.8px;width:16.8px;height:16.2px;border:1px solid #8aa6c4;border-radius:2px;background:linear-gradient(#d8e6f4,#eef4fa 55%,#ffffff 60%,#f4f8fc)"></div>
<svg style="left:111.8px;top:414.8px" width="14" height="10"><path d="M0.3 0.3H3L4.3 6L6 0.3H8L9.7 6L11 0.3H13.6L11 9.5H8.6L7 4.2L5.4 9.5H3Z" fill="#1d5ccc"/><path d="M0.3 0.3H3L4.3 6L3.6 8Z" fill="#3f8ee8"/></svg>
<div class="a" style="left:125px;top:417px;width:1.4px;height:1.4px;background:#4a90e0"></div>
<div class="a" style="left:125px;top:420px;width:1.4px;height:1.4px;background:#4a90e0"></div>
<div class="a" style="left:146.4px;top:413.2px;width:15.6px;height:15.1px;background:#0b1a2d;border:1.2px solid #2fa4f0"></div>
<div class="t" style="left:148.3px;top:414.2px;font-size:10.5px;color:#31a8ff;font-weight:400;-webkit-text-stroke:0.3px #31a8ff;transform:scaleX(0.92)">Ps</div>
<svg style="left:179px;top:412.5px" width="20" height="18"><ellipse cx="8" cy="10.5" rx="7.5" ry="5.8" fill="#e8eef6" stroke="#9fb6cc" stroke-width="0.6"/><circle cx="4" cy="10.5" r="1.3" fill="#e04848"/><circle cx="6.5" cy="7.3" r="1.3" fill="#58b848"/><circle cx="10.3" cy="6.6" r="1.3" fill="#f0c030"/><circle cx="7" cy="13.3" r="1.2" fill="#a8c8e8"/><path d="M17.5 1L9.5 16.5" stroke="#e0a030" stroke-width="1.8"/><path d="M16.5 0.5L19 1.8L17.8 4L15.6 2.6Z" fill="#d8b060"/></svg>
<div class="a" style="left:625.5px;top:417.5px;width:9.5px;height:9.5px;background:linear-gradient(135deg,#30c4f6,#1a8ee6)"></div>
<svg style="left:626px;top:418.5px" width="9" height="8"><path d="M1 4.5L4.3 1.5L7.6 4.5" fill="none" stroke="#bfeeff" stroke-width="0.9"/><path d="M2.2 4V6.8H6.4V4" fill="none" stroke="#9fe2ff" stroke-width="0.6"/></svg>
<svg style="left:638.6px;top:417.6px" width="9" height="10"><ellipse cx="4.5" cy="5" rx="4.2" ry="4.6" fill="#d9dde2"/><path d="M2 3L3 7.5L4.5 4L6 7.5L7 3" fill="none" stroke="#5a5e64" stroke-width="0.9"/><path d="M4.5 0.5V2.5" stroke="#3a3e44" stroke-width="1"/></svg>
<svg style="left:652.6px;top:418.3px" width="9" height="9"><path d="M0.8 3H2.5L4.6 0.8V8.2L2.5 6H0.8Z" fill="#f2f4f6"/><path d="M6 3Q6.8 4.5 6 6M7.6 2Q8.8 4.5 7.6 7" fill="none" stroke="#dfe4ea" stroke-width="0.6"/></svg>
<svg style="left:666.2px;top:417.8px" width="10" height="10"><circle cx="5" cy="5" r="4.6" fill="#6cbe3c"/><circle cx="5" cy="5" r="3.5" fill="#8ad050"/><path d="M3 2.5V5.5Q3 7.5 5 7.5Q7 7.5 7 5.5V2.5" fill="none" stroke="#fff" stroke-width="1.1"/><path d="M5 2V7" stroke="#fff" stroke-width="0.8"/></svg>
<svg style="left:679.2px;top:417.5px" width="10" height="10"><rect x="0" y="0" width="4.8" height="4.8" fill="#f0a020"/><rect x="5.2" y="0" width="4.8" height="4.8" fill="#1a88d8"/><rect x="0" y="5.2" width="4.8" height="4.8" fill="#38a838"/><rect x="5.2" y="5.2" width="4.8" height="4.8" fill="#e02828"/></svg>
<svg style="left:693.6px;top:418px" width="9" height="10"><path d="M0.8 0V9.5" stroke="#f4f6f8" stroke-width="0.9"/><path d="M1.2 0.8Q4 -0.2 5 1.2Q6.5 2.5 8.5 1.5V5Q6.5 6 5 4.8Q4 3.5 1.2 4.5Z" fill="#f4f6f8"/></svg>
<svg style="left:706.6px;top:418px" width="10" height="9"><path d="M0.5 8.5L9.5 1.5V8.5Z" fill="#7e8ea0"/><path d="M1 8.5V7.8M3 8.5V6.3M5 8.5V4.8M7 8.5V3.3M9 8.5V1.8" stroke="#f0f4f8" stroke-width="1.2"/></svg>
<div class="a" style="left:759.7px;top:410.8px;width:8.3px;height:22.2px;background:linear-gradient(90deg,#8797aa,#9cadc0);border-left:1px solid #6e7e92"></div>
<svg style="left:144.8px;top:38.8px" width="4" height="4"><path d="M0.3 0.3L3.7 3.7M3.7 0.3L0.3 3.7" stroke="#a8a8a8" stroke-width="0.9"/></svg>
<svg style="left:51px;top:402.5px" width="8" height="7"><path d="M0.5 1.5V6.5H6.5V4.5" fill="none" stroke="#bdbdbd" stroke-width="0.9"/><path d="M2.5 5Q3 2 6 2" fill="none" stroke="#bdbdbd" stroke-width="0.9"/><path d="M5.5 0.3L7.6 2L5.5 3.7Z" fill="#bdbdbd"/></svg>
<svg style="left:158px;top:403px" width="4" height="5"><path d="M0 0L3.5 2.5L0 5Z" fill="#dcdcdc"/></svg>
<div class="t" style="left:26.27px;top:3.80px;font-size:8px;color:#cfcfcf;font-weight:400;font-style:normal;transform:scaleX(0.822);">File</div>
<div class="t" style="left:45.79px;top:3.80px;font-size:8px;color:#cfcfcf;font-weight:400;font-style:normal;transform:scaleX(0.800);">Edit</div>
<div class="t" style="left:66.81px;top:3.80px;font-size:8px;color:#cfcfcf;font-weight:400;font-style:normal;transform:scaleX(0.814);">Image</div>
<div class="t" style="left:94.93px;top:3.80px;font-size:8px;color:#cfcfcf;font-weight:400;font-style:normal;transform:scaleX(0.740);">Layer</div>
<div class="t" style="left:120.27px;top:3.80px;font-size:8px;color:#cfcfcf;font-weight:400;font-style:normal;transform:scaleX(0.833);">Type</div>
<div class="t" style="left:144.70px;top:3.80px;font-size:8px;color:#cfcfcf;font-weight:400;font-style:normal;transform:scaleX(0.758);">Select</div>
<div class="t" style="left:172.18px;top:3.80px;font-size:8px;color:#cfcfcf;font-weight:400;font-style:normal;transform:scaleX(0.810);">Filter</div>
<div class="t" style="left:196.38px;top:3.80px;font-size:8px;color:#cfcfcf;font-weight:400;font-style:normal;transform:scaleX(0.835);">3D</div>
<div class="t" style="left:214.34px;top:3.80px;font-size:8px;color:#cfcfcf;font-weight:400;font-style:normal;transform:scaleX(0.771);">View</div>
<div class="t" style="left:238.23px;top:3.80px;font-size:8px;color:#cfcfcf;font-weight:400;font-style:normal;transform:scaleX(0.852);">Window</div>
<div class="t" style="left:272.13px;top:3.80px;font-size:8px;color:#cfcfcf;font-weight:400;font-style:normal;transform:scaleX(0.894);">Help</div>
<div class="t" style="left:49.40px;top:22.73px;font-size:6.2px;color:#d4d4d4;font-weight:400;font-style:normal;transform:scaleX(0.885);">Auto-Select:</div>
<div class="t" style="left:91.72px;top:22.73px;font-size:6.2px;color:#d8d8d8;font-weight:400;font-style:normal;transform:scaleX(0.887);">Group</div>
<div class="t" style="left:140.02px;top:22.73px;font-size:6.2px;color:#d4d4d4;font-weight:400;font-style:normal;transform:scaleX(0.913);">Show Transform Controls</div>
<div class="t" style="left:445.08px;top:22.73px;font-size:6.2px;color:#b0b0b0;font-weight:400;font-style:normal;transform:scaleX(0.899);">3D Mode:</div>
<div class="t" style="left:700.07px;top:22.93px;font-size:6.2px;color:#d8d8d8;font-weight:400;font-style:normal;transform:scaleX(0.872);">Essentials</div>
<div class="t" style="left:28.23px;top:37.93px;font-size:6.2px;color:#e6e6e6;font-weight:700;font-style:normal;transform:scaleX(0.994);-webkit-text-stroke:0">Untitled-1 @ 66.7% (Layer 1, RGB/8) *</div>
<div class="t" style="left:25.23px;top:402.93px;font-size:6.2px;color:#d0d0d0;font-weight:400;font-style:normal;transform:scaleX(0.887);">66.67%</div>
<div class="t" style="left:83.34px;top:402.93px;font-size:6.2px;color:#d0d0d0;font-weight:400;font-style:normal;transform:scaleX(0.918);">Doc: 3.00M/0 bytes</div>
<div class="t" style="left:636.02px;top:44.13px;font-size:6.2px;color:#e0e0e0;font-weight:400;font-style:normal;transform:scaleX(0.916);">Styles</div>
<div class="t" style="left:660.02px;top:44.13px;font-size:6.2px;color:#9e9e9e;font-weight:400;font-style:normal;transform:scaleX(0.899);">Swatches</div>
<div class="t" style="left:635.96px;top:163.63px;font-size:6.2px;color:#e0e0e0;font-weight:400;font-style:normal;transform:scaleX(0.882);">Layers</div>
<div class="t" style="left:660.35px;top:163.63px;font-size:6.2px;color:#9e9e9e;font-weight:400;font-style:normal;transform:scaleX(0.906);">Paths</div>
<div class="t" style="left:683.52px;top:163.63px;font-size:6.2px;color:#9e9e9e;font-weight:400;font-style:normal;transform:scaleX(0.896);">Channels</div>
<div class="t" style="left:646.85px;top:176.03px;font-size:6.2px;color:#d8d8d8;font-weight:400;font-style:normal;transform:scaleX(0.911);">Kind</div>
<div class="t" style="left:638.54px;top:192.03px;font-size:6.2px;color:#d8d8d8;font-weight:400;font-style:normal;transform:scaleX(0.932);">Normal</div>
<div class="t" style="left:711.52px;top:191.53px;font-size:6.2px;color:#cfcfcf;font-weight:400;font-style:normal;transform:scaleX(0.914);">Opacity:</div>
<div class="t" style="left:737.54px;top:191.53px;font-size:6.2px;color:#e0e0e0;font-weight:400;font-style:normal;transform:scaleX(0.925);">100%</div>
<div class="t" style="left:635.32px;top:207.93px;font-size:6.2px;color:#cfcfcf;font-weight:400;font-style:normal;transform:scaleX(0.959);">Lock:</div>
<div class="t" style="left:723.55px;top:207.23px;font-size:6.2px;color:#cfcfcf;font-weight:400;font-style:normal;transform:scaleX(0.912);">Fill:</div>
<div class="t" style="left:737.54px;top:207.23px;font-size:6.2px;color:#e0e0e0;font-weight:400;font-style:normal;transform:scaleX(0.925);">100%</div>
<div class="t" style="left:674.95px;top:225.03px;font-size:6.2px;color:#eef0f4;font-weight:400;font-style:normal;transform:scaleX(0.899);-webkit-text-stroke:0">Layer 1</div>
<div class="t" style="left:675.63px;top:238.93px;font-size:6.2px;color:#e6e6e6;font-weight:400;font-style:italic;transform:scaleX(0.908);-webkit-text-stroke:0">Background</div>
<div class="t" style="left:713.12px;top:402.33px;font-size:6.2px;color:#111111;font-weight:400;font-style:normal;transform:scaleX(0.902);">Create a new layer</div>
<div class="t" style="left:728.14px;top:414.56px;font-size:6.4px;color:#f4f6f8;font-weight:400;font-style:normal;transform:scaleX(1.011);">5:15 PM</div>
<div class="t" style="left:725.18px;top:423.56px;font-size:6.4px;color:#f4f6f8;font-weight:400;font-style:normal;transform:scaleX(1.009);">6/16/2021</div>
</div></body></html>
